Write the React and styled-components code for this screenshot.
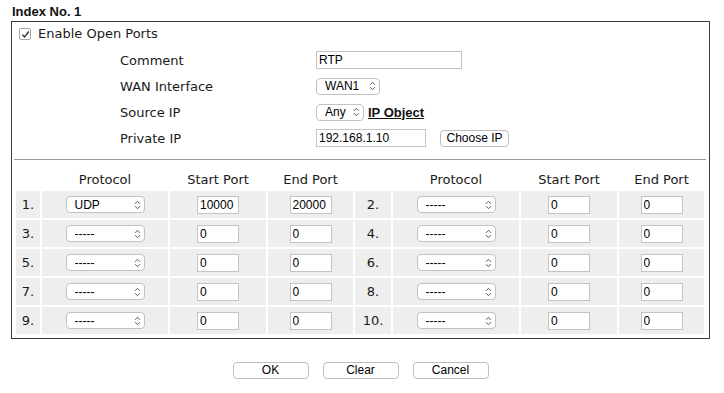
import React from "react";
import styled, { createGlobalStyle } from "styled-components";

const Global = createGlobalStyle`
  html, body { margin: 0; padding: 0; background: #ffffff; }
  body { font-family: "DejaVu Sans", Verdana, sans-serif; font-size: 13px; color: #1a1a1a; }
  * { box-sizing: border-box; }
`;

const Page = styled.div`
  width: 724px;
  height: 393px;
  padding-top: 4px;
`;

const Title = styled.div`
  font-family: "Liberation Sans", Arial, sans-serif;
  font-weight: bold;
  font-size: 13px;
  line-height: 15px;
  padding-left: 12px;
  color: #111;
`;

const Panel = styled.div`
  margin: 2px 0 0 11px;
  width: 699px;
  border: 1px solid #3a3a3a;
  padding: 4px 0 4px 0;
`;

const EnableRow = styled.label`
  display: flex;
  align-items: center;
  gap: 7px;
  padding-left: 7px;
  line-height: 15px;
  height: 15px;
`;

const CheckBox = styled.span`
  display: inline-flex;
  align-items: center;
  justify-content: center;
  width: 12px;
  height: 12px;
  border: 1px solid #a6a6a6;
  border-radius: 2px;
  background: #fff;
  margin-top: 1px;
`;

const FormGrid = styled.div`
  display: grid;
  grid-template-columns: 196px auto;
  grid-auto-rows: 26px;
  align-items: center;
  padding-left: 108px;
  margin-top: 6px;
`;

const Label = styled.div`
  line-height: 15px;
`;

const Value = styled.div`
  display: flex;
  align-items: center;
`;

const TextInput = styled.input`
  width: ${(p) => p.$w}px;
  height: 18px;
  border: 1px solid #c4c4c4;
  border-radius: 0;
  padding: 0 2px;
  font-family: "Liberation Sans", Arial, sans-serif;
  font-size: 12px;
  color: #000;
  background: #fff;
  outline: none;
  margin: 0;
`;

const SelectWrap = styled.span`
  position: relative;
  display: inline-flex;
  width: ${(p) => p.$w}px;
  height: 17px;
`;

const SelectEl = styled.select`
  appearance: none;
  -webkit-appearance: none;
  width: 100%;
  height: 100%;
  border: 1px solid #c2c2c2;
  border-radius: 4px;
  background: #fff;
  padding: 0 14px 0 ${(p) => p.$pl}px;
  font-family: "Liberation Sans", Arial, sans-serif;
  font-size: 12px;
  color: #000;
  margin: 0;
  outline: none;
`;

const Chevron = styled.svg`
  position: absolute;
  right: 4px;
  top: 50%;
  margin-top: -5px;
  pointer-events: none;
`;

const ObjLink = styled.a`
  font-family: "Liberation Sans", Arial, sans-serif;
  font-weight: bold;
  font-size: 13px;
  color: #111;
  text-decoration: underline;
  margin-left: 4px;
`;

const Button = styled.button`
  width: ${(p) => p.$w}px;
  height: 17px;
  border: 1px solid #bdbdbd;
  border-radius: 4px;
  background: #fff;
  font-family: "Liberation Sans", Arial, sans-serif;
  font-size: 12px;
  color: #000;
  padding: 0;
  margin: 0 0 0 ${(p) => p.$ml || 0}px;
  line-height: 15px;
`;

const Divider = styled.div`
  height: 1px;
  background: #9c9c9c;
  margin: 8px 3px 0 2px;
`;

const PortGrid = styled.div`
  display: grid;
  grid-template-columns: 24px 126px 96px 85px 36px 126px 96px 85px;
  grid-auto-rows: 27px;
  gap: 2px;
  padding: 0 4px;
  margin-top: 2px;
`;

const HeadCell = styled.div`
  display: flex;
  align-items: flex-end;
  justify-content: center;
  padding-bottom: 2px;
  line-height: 15px;
  white-space: nowrap;
`;

const Cell = styled.div`
  background: #eeeeee;
  display: flex;
  align-items: center;
  justify-content: center;
  line-height: 15px;
`;

const ButtonRow = styled.div`
  width: 699px;
  margin: 23px 0 0 11px;
  display: flex;
  justify-content: center;
  gap: 14px;
`;

function Select({ w, pl = 8, value }) {
  return (
    <SelectWrap $w={w}>
      <SelectEl $pl={pl} defaultValue={value}>
        <option value={value}>{value}</option>
      </SelectEl>
      <Chevron width="7" height="10" viewBox="0 0 7 10">
        <path d="M1 3.8 L3.5 1.3 L6 3.8 M1 6.2 L3.5 8.7 L6 6.2" fill="none" stroke="#555" strokeWidth="1" />
      </Chevron>
    </SelectWrap>
  );
}

const ports = [
  { n: 1, p: "UDP", s: "10000", e: "20000" },
  { n: 2, p: "-----", s: "0", e: "0" },
  { n: 3, p: "-----", s: "0", e: "0" },
  { n: 4, p: "-----", s: "0", e: "0" },
  { n: 5, p: "-----", s: "0", e: "0" },
  { n: 6, p: "-----", s: "0", e: "0" },
  { n: 7, p: "-----", s: "0", e: "0" },
  { n: 8, p: "-----", s: "0", e: "0" },
  { n: 9, p: "-----", s: "0", e: "0" },
  { n: 10, p: "-----", s: "0", e: "0" },
];

function PortCells({ item }) {
  return (
    <>
      <Cell>{item.n}.</Cell>
      <Cell><Select w={79} value={item.p} /></Cell>
      <Cell><TextInput $w={42} defaultValue={item.s} /></Cell>
      <Cell><TextInput $w={42} defaultValue={item.e} /></Cell>
    </>
  );
}

export default function App() {
  return (
    <Page>
      <Global />
      <Title>Index No. 1</Title>
      <Panel>
        <EnableRow>
          <CheckBox>
            <svg width="9" height="9" viewBox="0 0 9 9">
              <path d="M1.3 4.6 L3.5 7 L7.8 1.5" fill="none" stroke="#333" strokeWidth="1.4" />
            </svg>
          </CheckBox>
          Enable Open Ports
        </EnableRow>
        <FormGrid>
          <Label>Comment</Label>
          <Value><TextInput $w={146} defaultValue="RTP" /></Value>
          <Label>WAN Interface</Label>
          <Value><Select w={64} pl={8} value="WAN1" /></Value>
          <Label>Source IP</Label>
          <Value>
            <Select w={48} pl={8} value="Any" />
            <ObjLink>IP Object</ObjLink>
          </Value>
          <Label>Private IP</Label>
          <Value>
            <TextInput $w={110} defaultValue="192.168.1.10" />
            <Button $w={69} $ml={14}>Choose IP</Button>
          </Value>
        </FormGrid>
        <Divider />
        <PortGrid>
          <HeadCell />
          <HeadCell>Protocol</HeadCell>
          <HeadCell>Start Port</HeadCell>
          <HeadCell>End Port</HeadCell>
          <HeadCell />
          <HeadCell>Protocol</HeadCell>
          <HeadCell>Start Port</HeadCell>
          <HeadCell>End Port</HeadCell>
          {ports.map((item) => (
            <PortCells key={item.n} item={item} />
          ))}
        </PortGrid>
      </Panel>
      <ButtonRow>
        <Button $w={76}>OK</Button>
        <Button $w={76}>Clear</Button>
        <Button $w={76}>Cancel</Button>
      </ButtonRow>
    </Page>
  );
}
